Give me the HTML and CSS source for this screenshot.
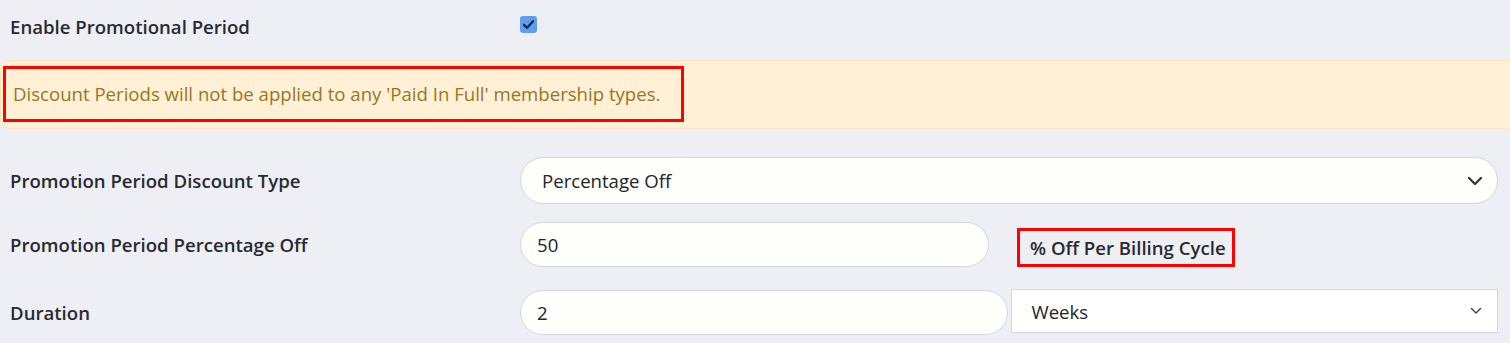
FILE: index.html
```html
<!DOCTYPE html>
<html lang="en">
<head>
  <meta charset="UTF-8" />
  <meta name="viewport" content="width=device-width, initial-scale=1.0"/>
  <title>Promotional Period</title>
  <link rel="stylesheet" href="styles.css">
</head>
<body>
  <div class="form">
    <div class="row toggle-row">
      <label class="label">Enable Promotional Period</label>
      <div class="control">
        <span class="check">
          <svg width="13" height="13" viewBox="0 0 13 13"><path d="M2 6.8 L5.2 9.8 L11 3.2" fill="none" stroke="#13284a" stroke-width="2.3" stroke-linecap="round" stroke-linejoin="round"/></svg>
        </span>
      </div>
    </div>

    <div class="notice">
      <span class="mark notice-text">Discount Periods will not be applied to any 'Paid In Full' membership types.</span>
    </div>

    <div class="row row-type">
      <label class="label">Promotion Period Discount Type</label>
      <div class="control">
        <div class="field select">
          <span>Percentage Off</span>
          <svg width="16" height="10" viewBox="0 0 16 10"><path d="M2 2 L8 8 L14 2" fill="none" stroke="#2f343b" stroke-width="2.2" stroke-linecap="round" stroke-linejoin="round"/></svg>
        </div>
      </div>
    </div>

    <div class="row row-percent">
      <label class="label">Promotion Period Percentage Off</label>
      <div class="control split">
        <input class="field input-percent" type="text" value="50">
        <span class="mark suffix">% Off Per Billing Cycle</span>
      </div>
    </div>

    <div class="row row-duration">
      <label class="label">Duration</label>
      <div class="control pair">
        <input class="field" type="text" value="2">
        <div class="field unit">
          <span>Weeks</span>
          <svg width="12" height="8" viewBox="0 0 12 8"><path d="M1.5 1.5 L6 6 L10.5 1.5" fill="none" stroke="#3a3f47" stroke-width="1.4" stroke-linecap="round" stroke-linejoin="round"/></svg>
        </div>
      </div>
    </div>
  </div>
</body>
</html>
```

FILE: styles.css
```css
* {
  box-sizing: border-box;
  font-family: 'Open Sans', 'Noto Sans', sans-serif;
}

body {
  margin: 0;
  background: #eeeff4;
  overflow: hidden;
}

.form {
  padding: 0 12px 0 10px;
}

.row {
  display: grid;
  grid-template-columns: 510px 1fr;
  align-items: center;
}

.label {
  font-size: 18.6px;
  font-weight: 600;
  color: #272b31;
}

.toggle-row {
  height: 52px;
}

.check {
  width: 17px;
  height: 17px;
  margin-top: -3px;
  border-radius: 3px;
  background: #5e9eef;
  display: flex;
  align-items: center;
  justify-content: center;
}

.notice {
  margin: 8px -22px 0 -10px;
  height: 69px;
  padding: 5px 0 0 2px;
  background: #fff0d6;
  border: 1px solid #fde7bd;
  border-radius: 8px;
}

.mark {
  display: inline-block;
  border: 3px solid #ff0000;
}

.notice-text {
  width: 681px;
  height: 56px;
  padding: 12px 0 0 7px;
  font-size: 18.6px;
  color: #9a7524;
}

.field {
  height: 47px;
  background: #fefefb;
  border: 1px solid #d3d6dd;
  border-radius: 24px;
  font-size: 18.6px;
  color: #212529;
}

input.field {
  padding: 0 16px;
  outline: none;
}

.select {
  display: flex;
  align-items: center;
  justify-content: space-between;
  padding: 0 14px 0 21px;
}

.row-type {
  margin-top: 28px;
}

.row-percent {
  margin-top: 18px;
}

.row-percent .field,
.row-duration .field {
  height: 45px;
}

.split {
  display: flex;
  align-items: center;
  gap: 28px;
}

.input-percent {
  width: 469px;
}

.suffix {
  height: 39px;
  margin-top: 5px;
  padding: 4px 0 0 10px;
  width: 218px;
  font-size: 18.6px;
  font-weight: 600;
  color: #272b31;
}

.row-duration {
  margin-top: 23px;
}

.pair {
  display: grid;
  grid-template-columns: 1fr 1fr;
  gap: 3px;
}

.row-duration .unit {
  height: 44px;
  margin-top: -1px;
  border-radius: 0;
  background: #ffffff;
  display: flex;
  align-items: center;
  justify-content: space-between;
  padding: 0 15px 0 20px;
}
```
